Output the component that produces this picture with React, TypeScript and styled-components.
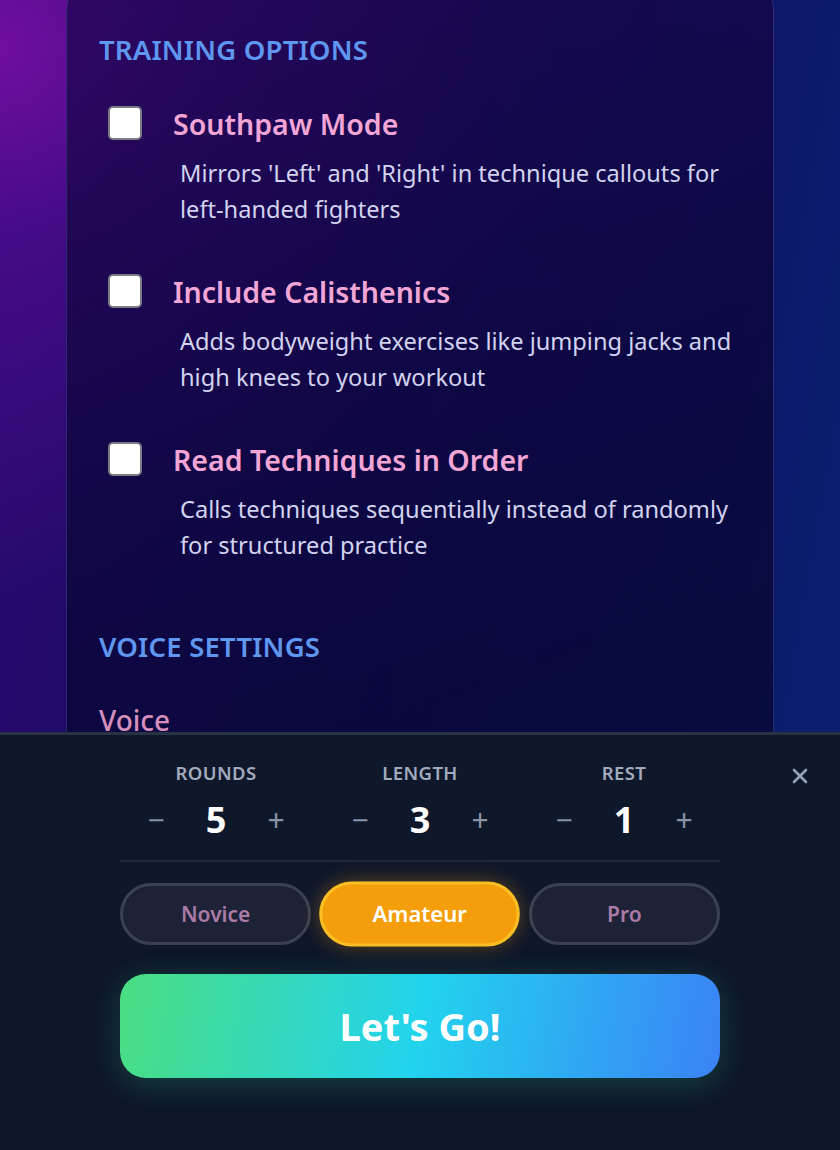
import React, { useState } from "react";
import styled, { createGlobalStyle, css } from "styled-components";

const GlobalStyle = createGlobalStyle`
  html, body {
    margin: 0;
    padding: 0;
    background: #0f172a;
  }
  * { box-sizing: border-box; }
  body {
    font-family: "Noto Sans", "Open Sans", sans-serif;
  }
`;

const options = [
  {
    title: "Southpaw Mode",
    text: "Mirrors 'Left' and 'Right' in technique callouts for left-handed fighters",
  },
  {
    title: "Include Calisthenics",
    text: "Adds bodyweight exercises like jumping jacks and high knees to your workout",
  },
  {
    title: "Read Techniques in Order",
    text: "Calls techniques sequentially instead of randomly for structured practice",
  },
];

const steppers = [
  { label: "ROUNDS", value: 5 },
  { label: "LENGTH", value: 3 },
  { label: "REST", value: 1 },
];

const levels = ["Novice", "Amateur", "Pro"];

export default function App() {
  const [level, setLevel] = useState("Amateur");

  return (
    <Page>
      <GlobalStyle />
      <Card>
        <SectionTitle>TRAINING OPTIONS</SectionTitle>
        <OptionList>
          {options.map((o) => (
            <Option key={o.title}>
              <Check type="checkbox" />
              <OptionBody>
                <OptionTitle>{o.title}</OptionTitle>
                <OptionText>{o.text}</OptionText>
              </OptionBody>
            </Option>
          ))}
        </OptionList>
        <SectionTitle $spaced>VOICE SETTINGS</SectionTitle>
        <FieldLabel>Voice</FieldLabel>
        <Spacer />
      </Card>

      <Panel>
        <CloseButton aria-label="Close">
          <svg width="18" height="18" viewBox="0 0 18 18">
            <path d="M3 3 L15 15 M15 3 L3 15" stroke="#94a3b8" strokeWidth="2.6" strokeLinecap="round" />
          </svg>
        </CloseButton>
        <PanelInner>
          <Steppers>
            {steppers.map((s) => (
              <Stepper key={s.label}>
                <StepLabel>{s.label}</StepLabel>
                <StepRow>
                  <StepButton>−</StepButton>
                  <StepValue>{s.value}</StepValue>
                  <StepButton>+</StepButton>
                </StepRow>
              </Stepper>
            ))}
          </Steppers>
          <Divider />
          <Levels>
            {levels.map((l) => (
              <Level key={l} $active={l === level} onClick={() => setLevel(l)}>
                {l}
              </Level>
            ))}
          </Levels>
          <GoButton>Let's Go!</GoButton>
        </PanelInner>
      </Panel>
    </Page>
  );
}

const Page = styled.div`
  min-height: 1150px;
  padding: 0 66px;
  background:
    radial-gradient(circle at 0% 4%, rgba(120, 14, 165, 0.9) 0%, rgba(95, 12, 155, 0.5) 14%, rgba(60, 10, 130, 0) 40%),
    linear-gradient(100deg, #2a0a72 0%, #1a0b62 35%, #0e1466 65%, #0a2270 100%);
  overflow: hidden;
`;

const Card = styled.div`
  margin-top: -14px;
  padding: 46px 32px 0 32px;
  border: 1px solid rgba(120, 130, 200, 0.28);
  border-radius: 22px;
  background: linear-gradient(160deg, rgba(30, 6, 80, 0.7) 0%, rgba(12, 6, 60, 0.8) 40%, rgba(2, 10, 46, 0.85) 100%);
`;

const SectionTitle = styled.h2<{ $spaced?: boolean }>`
  margin: ${(p) => (p.$spaced ? "67px 0 0" : "0")};
  font-size: 27.5px;
  line-height: 34px;
  font-weight: 600;
  color: #5f97f0;
  letter-spacing: 0.2px;
`;

const OptionList = styled.div`
  display: flex;
  flex-direction: column;
  gap: 46px;
  margin-top: 38px;
`;

const Option = styled.label`
  display: flex;
  align-items: flex-start;
  gap: 31px;
  padding-left: 9px;
`;

const Check = styled.input`
  appearance: none;
  margin: 1px 0 0 0;
  width: 34px;
  height: 34px;
  flex: none;
  background: #fff;
  border: 2px solid #7b7b86;
  border-radius: 5px;
`;

const OptionBody = styled.div`
  display: flex;
  flex-direction: column;
`;

const OptionTitle = styled.span`
  font-size: 28.5px;
  line-height: 38px;
  font-weight: 600;
  color: #f3a6d6;
`;

const OptionText = styled.p`
  margin: 12px 0 0 7px;
  font-size: 23.6px;
  line-height: 36px;
  color: #d2d3ef;
`;

const FieldLabel = styled.div`
  margin-top: 38px;
  font-size: 28px;
  line-height: 36px;
  font-weight: 500;
  color: #d58fbc;
`;

const Spacer = styled.div`
  height: 400px;
`;

const Panel = styled.div`
  position: fixed;
  left: 0;
  right: 0;
  bottom: 0;
  height: 418px;
  background: #0f172a;
  border-top: 3px solid #283244;
`;

const PanelInner = styled.div`
  width: 600px;
  margin: 0 auto;
  padding-top: 25px;
  display: flex;
  flex-direction: column;
`;

const CloseButton = styled.button`
  position: absolute;
  top: 31px;
  right: 30px;
  width: 20px;
  height: 20px;
  padding: 0;
  border: none;
  background: none;
  display: flex;
  align-items: center;
  justify-content: center;
`;

const Steppers = styled.div`
  display: grid;
  grid-template-columns: repeat(3, 204px);
  justify-content: center;
`;

const Stepper = styled.div`
  display: flex;
  flex-direction: column;
  align-items: center;
`;

const StepLabel = styled.div`
  font-size: 18.5px;
  line-height: 26px;
  font-weight: 600;
  color: #a2abbd;
  letter-spacing: 0.4px;
`;

const StepRow = styled.div`
  display: flex;
  align-items: center;
  margin-top: 12px;
`;

const StepButton = styled.button`
  width: 44px;
  padding: 0;
  border: none;
  background: none;
  font-family: inherit;
  font-size: 30px;
  line-height: 44px;
  color: #8792a6;
`;

const StepValue = styled.span`
  width: 76px;
  text-align: center;
  font-size: 36px;
  line-height: 44px;
  font-weight: 700;
  color: #fff;
`;

const Divider = styled.div`
  height: 2px;
  margin-top: 18px;
  background: #1f293a;
`;

const Levels = styled.div`
  display: grid;
  grid-template-columns: repeat(3, 1fr);
  gap: 13px;
  margin-top: 21px;
`;

const Level = styled.button<{ $active: boolean }>`
  height: 62px;
  border-radius: 31px;
  border: 3px solid #3a4152;
  background: #1d2236;
  color: #a97ba6;
  font-family: inherit;
  font-size: 21px;
  font-weight: 600;
  ${(p) =>
    p.$active &&
    css`
      transform: scale(1.05);
      background: #f59e0b;
      border-color: #fbbf24;
      color: #fff;
      box-shadow: 0 0 18px rgba(245, 158, 11, 0.35);
    `}
`;

const GoButton = styled.button`
  margin-top: 29px;
  height: 104px;
  border: none;
  border-radius: 26px;
  background: linear-gradient(100deg, #4ade80 0%, #22d3ee 50%, #3b82f6 100%);
  color: #fff;
  font-family: inherit;
  font-size: 38px;
  font-weight: 700;
  box-shadow: 0 6px 30px rgba(34, 197, 120, 0.25);
`;
